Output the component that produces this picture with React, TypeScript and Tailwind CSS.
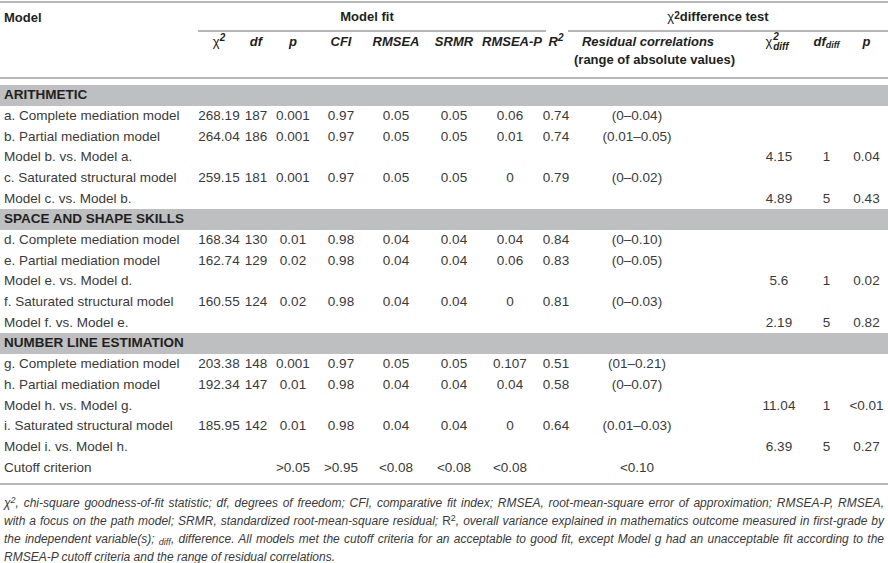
import React from "react";

const cols =
  "grid grid-cols-[196px_46px_28px_46px_50px_60px_56px_56px_36px_176px_58px_37px_43px]";

type Row = {
  label: string;
  v?: string[];
  d?: string[];
};

const sections: { title: string; rows: Row[] }[] = [
  {
    title: "ARITHMETIC",
    rows: [
      { label: "a. Complete mediation model", v: ["268.19", "187", "0.001", "0.97", "0.05", "0.05", "0.06", "0.74", "(0–0.04)"] },
      { label: "b. Partial mediation model", v: ["264.04", "186", "0.001", "0.97", "0.05", "0.05", "0.01", "0.74", "(0.01–0.05)"] },
      { label: "Model b. vs. Model a.", d: ["4.15", "1", "0.04"] },
      { label: "c. Saturated structural model", v: ["259.15", "181", "0.001", "0.97", "0.05", "0.05", "0", "0.79", "(0–0.02)"] },
      { label: "Model c. vs. Model b.", d: ["4.89", "5", "0.43"] },
    ],
  },
  {
    title: "SPACE AND SHAPE SKILLS",
    rows: [
      { label: "d. Complete mediation model", v: ["168.34", "130", "0.01", "0.98", "0.04", "0.04", "0.04", "0.84", "(0–0.10)"] },
      { label: "e. Partial mediation model", v: ["162.74", "129", "0.02", "0.98", "0.04", "0.04", "0.06", "0.83", "(0–0.05)"] },
      { label: "Model e. vs. Model d.", d: ["5.6", "1", "0.02"] },
      { label: "f. Saturated structural model", v: ["160.55", "124", "0.02", "0.98", "0.04", "0.04", "0", "0.81", "(0–0.03)"] },
      { label: "Model f. vs. Model e.", d: ["2.19", "5", "0.82"] },
    ],
  },
  {
    title: "NUMBER LINE ESTIMATION",
    rows: [
      { label: "g. Complete mediation model", v: ["203.38", "148", "0.001", "0.97", "0.05", "0.05", "0.107", "0.51", "(01–0.21)"] },
      { label: "h. Partial mediation model", v: ["192.34", "147", "0.01", "0.98", "0.04", "0.04", "0.04", "0.58", "(0–0.07)"] },
      { label: "Model h. vs. Model g.", d: ["11.04", "1", "<0.01"] },
      { label: "i. Saturated structural model", v: ["185.95", "142", "0.01", "0.98", "0.04", "0.04", "0", "0.64", "(0.01–0.03)"] },
      { label: "Model i. vs. Model h.", d: ["6.39", "5", "0.27"] },
    ],
  },
];

function DataRow({ row }: { row: Row }) {
  const v = row.v ?? ["", "", "", "", "", "", "", "", ""];
  const d = row.d ?? ["", "", ""];
  return (
    <div className={`${cols} h-[20.7px] items-center`}>
      <div className="pl-[4px] whitespace-nowrap">{row.label}</div>
      {v.slice(0, 8).map((x, i) => (
        <div key={i} className="text-center whitespace-nowrap">{x}</div>
      ))}
      <div className="text-center whitespace-nowrap pr-[50px]">{v[8]}</div>
      {d.map((x, i) => (
        <div key={i} className="text-center whitespace-nowrap">{x}</div>
      ))}
    </div>
  );
}

export default function App() {
  return (
    <div
      className="w-[888px] h-[563px] bg-white text-[13.5px] text-[#3a3a3a] overflow-hidden"
      style={{ fontFamily: '"Liberation Sans", Arial, sans-serif' }}
    >
      <div className="mt-[1px] border-t-2 border-[#b5b7b9]">
        <div className={`${cols} h-[29px] text-[13px] font-bold text-[#231f20]`}>
          <div className="pl-[4px] flex items-center">Model</div>
          <div className="col-span-7 flex flex-col">
            <div className="flex-1 flex items-center justify-center">Model fit</div>
            <div className="ml-[2px] mr-[-8px] border-b-2 border-[#b5b7b9]" />
          </div>
          <div />
          <div className="col-span-4 flex flex-col">
            <div className="flex-1 flex items-center justify-center pr-[26px]">
              <span className="font-normal">χ</span>
              <sup className="text-[10px] relative top-[-1px]">2</sup>
              <span>difference test</span>
            </div>
            <div className="ml-[-6px] border-b-2 border-[#b5b7b9]" />
          </div>
        </div>
        <div className={`${cols} h-[47px] pt-[1px] text-[13px] leading-[18px] font-bold italic text-[#231f20] border-b-2 border-[#b5b7b9]`}>
          <div />
          <div className="text-center not-italic">
            <span className="font-normal">χ</span>
            <sup className="italic text-[10px]">2</sup>
          </div>
          <div className="text-center">df</div>
          <div className="text-center">p</div>
          <div className="text-center">CFI</div>
          <div className="text-center">RMSEA</div>
          <div className="text-center">SRMR</div>
          <div className="text-center whitespace-nowrap pr-[4px]">RMSEA-P</div>
          <div className="text-center">
            R<sup className="text-[10px]">2</sup>
          </div>
          <div className="text-center whitespace-nowrap pr-[28px]">
            <div>Residual correlations</div>
            <div className="not-italic">(range of absolute values)</div>
          </div>
          <div className="flex justify-center pr-[4px]">
            <span className="font-normal not-italic">χ</span>
            <span className="flex flex-col leading-[10px] text-[10px] mt-[-1px] ml-[1px]">
              <span>2</span>
              <span>diff</span>
            </span>
          </div>
          <div className="text-center whitespace-nowrap">
            df<sub className="text-[9px]">diff</sub>
          </div>
          <div className="text-center">p</div>
        </div>
        <div className="h-[6px]" />
        {sections.map((s) => (
          <div key={s.title}>
            <div className="h-[20.7px] bg-[#bdbfc1] flex items-center pl-[4px] font-bold text-[#231f20]">
              {s.title}
            </div>
            {s.rows.map((r) => (
              <DataRow key={r.label} row={r} />
            ))}
          </div>
        ))}
        <div className={`${cols} h-[20.7px] items-center`}>
          <div className="pl-[4px]">Cutoff criterion</div>
          <div />
          <div />
          <div className="text-center">&gt;0.05</div>
          <div className="text-center">&gt;0.95</div>
          <div className="text-center">&lt;0.08</div>
          <div className="text-center">&lt;0.08</div>
          <div className="text-center">&lt;0.08</div>
          <div />
          <div className="text-center pr-[50px]">&lt;0.10</div>
          <div />
          <div />
          <div />
        </div>
        <div className="h-[7px] border-b-2 border-[#b5b7b9]" />
      </div>
      <div className="pt-[9px] pl-[4px] pr-[4px] italic text-[12px] leading-[18px] text-[#3a3a3a]">
        <div className="whitespace-nowrap [text-align-last:justify]">
          χ<sup className="text-[9px]">2</sup>, chi-square goodness-of-fit statistic; df, degrees of freedom; CFI, comparative fit index; RMSEA, root-mean-square error of approximation; RMSEA-P, RMSEA,
        </div>
        <div className="whitespace-nowrap [text-align-last:justify]">
          with a focus on the path model; SRMR, standardized root-mean-square residual; <span className="not-italic">R<sup className="text-[9px]">2</sup></span>, overall variance explained in mathematics outcome measured in first-grade by
        </div>
        <div className="whitespace-nowrap [text-align-last:justify]">
          the independent variable(s); <sub className="text-[9px]">diff</sub>, difference. All models met the cutoff criteria for an acceptable to good fit, except Model g had an unacceptable fit according to the
        </div>
        <div className="whitespace-nowrap">
          RMSEA-P cutoff criteria and the range of residual correlations.
        </div>
      </div>
    </div>
  );
}
